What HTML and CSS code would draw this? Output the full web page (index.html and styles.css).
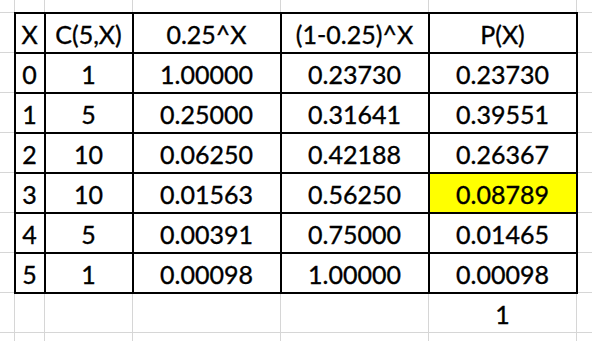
FILE: index.html
```html
<!DOCTYPE html>
<html>
<head>
<meta charset="utf-8">
<link rel="stylesheet" href="styles.css">
</head>
<body>
<table class="sheet">
  <colgroup>
    <col class="c-edge"><col class="c-x"><col class="c-comb"><col class="c-num"><col class="c-num"><col class="c-num"><col class="c-tail">
  </colgroup>
  <tr class="r-top"><td></td><td></td><td></td><td></td><td></td><td></td><td></td></tr>
  <tr class="row"><td></td><td class="t">X</td><td class="t">C(5,X)</td><td class="t">0.25^X</td><td class="t">(1-0.25)^X</td><td class="t">P(X)</td><td></td></tr>
  <tr class="row"><td></td><td class="t">0</td><td class="t">1</td><td class="t">1.00000</td><td class="t">0.23730</td><td class="t">0.23730</td><td></td></tr>
  <tr class="row"><td></td><td class="t">1</td><td class="t">5</td><td class="t">0.25000</td><td class="t">0.31641</td><td class="t">0.39551</td><td></td></tr>
  <tr class="row"><td></td><td class="t">2</td><td class="t">10</td><td class="t">0.06250</td><td class="t">0.42188</td><td class="t">0.26367</td><td></td></tr>
  <tr class="row"><td></td><td class="t">3</td><td class="t">10</td><td class="t">0.01563</td><td class="t">0.56250</td><td class="t hl">0.08789</td><td></td></tr>
  <tr class="row"><td></td><td class="t">4</td><td class="t">5</td><td class="t">0.00391</td><td class="t">0.75000</td><td class="t">0.01465</td><td></td></tr>
  <tr class="row"><td></td><td class="t">5</td><td class="t">1</td><td class="t">0.00098</td><td class="t">1.00000</td><td class="t">0.00098</td><td></td></tr>
  <tr class="row"><td></td><td></td><td></td><td></td><td></td><td class="sum">1</td><td></td></tr>
  <tr class="r-bot"><td></td><td></td><td></td><td></td><td></td><td></td><td></td></tr>
</table>
</body>
</html>
```

FILE: styles.css
```css
html, body {
  margin: 0;
  padding: 0;
  background: #ffffff;
  overflow: hidden;
}
.sheet {
  border-collapse: collapse;
  table-layout: fixed;
  width: 593px;
  margin: -1px 0 0 -1px;
  font-family: Lato, "Open Sans", sans-serif;
  font-size: 25px;
  color: #000;
  -webkit-text-stroke: 0.35px #000;
}
.c-edge { width: 15px; }
.c-x { width: 30px; }
.c-comb { width: 88px; }
.c-num { width: 148px; }
.c-tail { width: 16px; }
.sheet td {
  border: 1px solid #d6d6d6;
  padding: 0 0 3px 0;
  text-align: center;
  vertical-align: bottom;
  white-space: nowrap;
  overflow: hidden;
}
.r-top { height: 13px; }
.row { height: 40px; }
.r-bot { height: 10px; }
.sheet td.t {
  border: 2px solid #000;
}
.hl {
  background: #ffff00;
}
```
